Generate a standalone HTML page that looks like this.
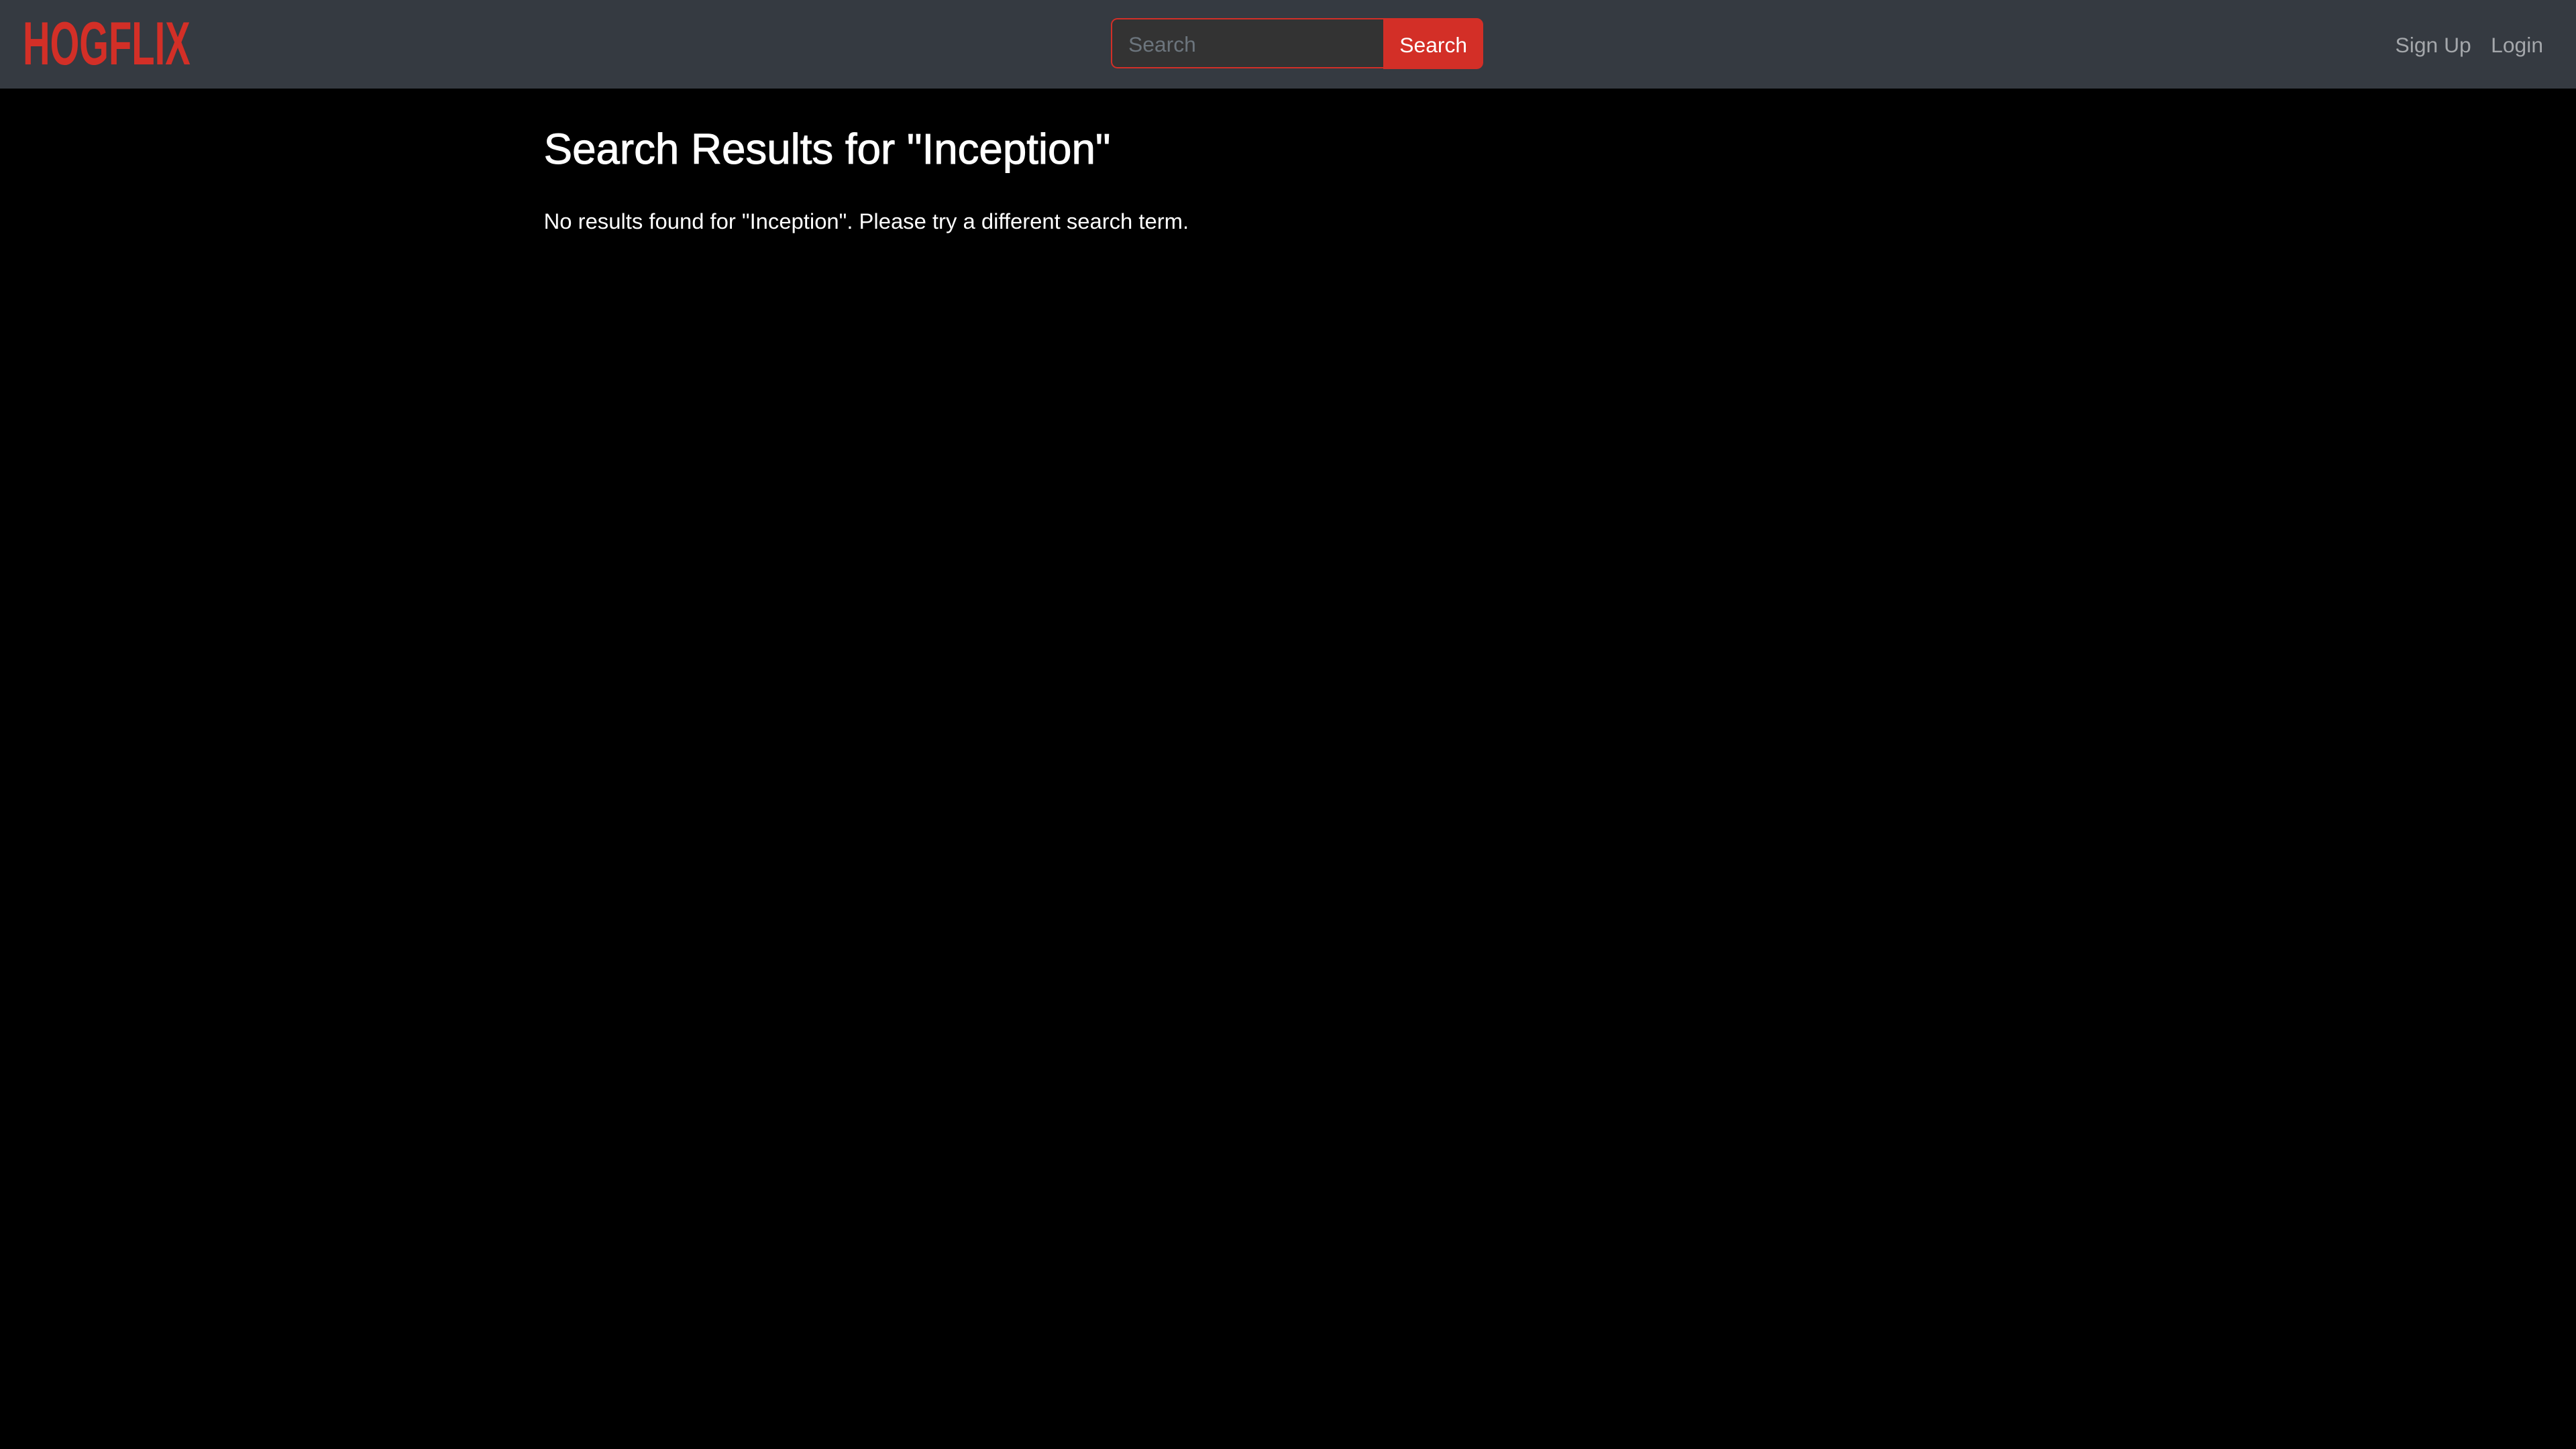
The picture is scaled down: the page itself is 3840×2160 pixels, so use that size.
<!DOCTYPE html>
<html><head><meta charset="utf-8"><style>
html,body{margin:0;padding:0;background:#000;}
body{width:1568px;height:882px;zoom:2.44898;font-family:"Liberation Sans",Arial,sans-serif;overflow:hidden;}
.nav{height:54px;background:#353a41;position:relative;}
.logo{position:absolute;left:14px;top:7px;color:#d32f27;font-weight:bold;font-size:37px;line-height:40px;transform:scaleX(0.62);transform-origin:left top;}
.search{position:absolute;left:676px;top:11px;width:227px;height:31px;}
.inp{position:absolute;left:0;top:0;height:29px;background:#333;border:1px solid #d32f27;border-radius:4px 0 0 4px;border-right:none;color:#6c757d;font-size:13px;line-height:31px;padding-left:10px;width:155px;}
.btn{position:absolute;left:166px;top:0;width:61px;height:31px;background:#d32f27;border-radius:0 4px 4px 0;color:#fff;font-size:13px;line-height:33px;text-align:center;}
.links{position:absolute;right:20px;top:20px;color:#a4a7ab;font-size:13px;}
.links span{margin-left:12px;}
h2{position:absolute;left:331px;top:73px;margin:0;color:#fff;font-size:26px;font-weight:normal;line-height:36px;-webkit-text-stroke:0.4px #fff;}
p{position:absolute;left:331px;top:126px;margin:0;color:#fff;font-size:13.4px;line-height:17px;}
</style></head><body>
<div class="nav">
<div class="logo">HOGFLIX</div>
<div class="search"><div class="inp">Search</div><div class="btn">Search</div></div>
<div class="links"><span>Sign Up</span><span>Login</span></div>
</div>
<h2>Search Results for "Inception"</h2>
<p>No results found for "Inception". Please try a different search term.</p>
</body></html>
